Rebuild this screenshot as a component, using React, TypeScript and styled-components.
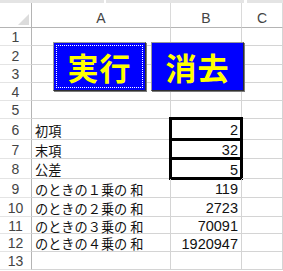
import React, { FC } from 'react';
import styled, { createGlobalStyle } from 'styled-components';

interface Row {
    h: number,
    a?: string,
    b?: string,
    box?: boolean,
}

const rows: Row[] = [
    { h: 18 },
    { h: 19 },
    { h: 18 },
    { h: 18 },
    { h: 18 },
    { h: 21, a: '初項', b: '2', box: true },
    { h: 19, a: '末項', b: '32', box: true },
    { h: 20, a: '公差', b: '5', box: true },
    { h: 19, a: 'のときの１乗の 和', b: '119' },
    { h: 19, a: 'のときの２乗の 和', b: '2723' },
    { h: 17, a: 'のときの３乗の 和', b: '70091' },
    { h: 18, a: 'のときの４乗の 和', b: '1920947' },
    { h: 18 },
];

const columns = ['A', 'B', 'C'];

const App: FC = () => {
    const template = rows.map((r) => `${r.h}px`).join(' ');

    return (
        <>
            <GlobalStyle />
            <Page>
                <TopStrip />
                <Sheet $rows={template}>
                    <Corner>
                        <svg width="11" height="11" viewBox="0 0 11 11">
                            <polygon points="11,0 11,11 0,11" fill="#dcdcdc" />
                        </svg>
                    </Corner>
                    {columns.map((c) => (
                        <ColHeader key={c}>{c}</ColHeader>
                    ))}
                    {rows.map((r, i) => (
                        <React.Fragment key={i}>
                            <RowHeader>{i + 1}</RowHeader>
                            <Cell>{r.a}</Cell>
                            <Cell $num $box={r.box}>{r.b}</Cell>
                            <Cell />
                        </React.Fragment>
                    ))}
                </Sheet>
                <CommandButton $left={53} $focused>実行</CommandButton>
                <CommandButton $left={151}>消去</CommandButton>
            </Page>
        </>
    );
};
export default App;

const GlobalStyle = createGlobalStyle`
    html, body {
        margin: 0;
        padding: 0;
        background: #fff;
    }
    body {
        font-family: "Noto Sans CJK JP", "Liberation Sans", sans-serif;
    }
`;

const Page = styled.div`
    position: relative;
    width: 283px;
    height: 271px;
    overflow: hidden;
    background: #fff;
`;

const TopStrip = styled.div`
    height: 3px;
    background: linear-gradient(to right, #e4e4e4 0 104px, #fff 104px 106px, #e4e4e4 106px 244px, #fff 244px 247px, #e4e4e4 247px);
`;

const Sheet = styled.div<{ $rows: string }>`
    display: grid;
    grid-template-columns: 32px 139px 71px 1fr;
    grid-template-rows: 25px ${(p) => p.$rows};
`;

const Corner = styled.div`
    display: flex;
    align-items: flex-end;
    justify-content: flex-end;
    padding: 0 2px 2px 0;
    border-right: 1px solid #b4b4b4;
    border-bottom: 1px solid #b4b4b4;
`;

const ColHeader = styled.div`
    display: flex;
    align-items: center;
    justify-content: center;
    padding-top: 6px;
    box-sizing: border-box;
    font-family: "Liberation Sans", sans-serif;
    font-size: 14px;
    color: #444;
    border-bottom: 1px solid #b4b4b4;
    border-right: 1px solid #dadada;
`;

const RowHeader = styled.div`
    display: flex;
    align-items: center;
    justify-content: center;
    padding-top: 1px;
    font-family: "Liberation Sans", sans-serif;
    font-size: 14px;
    color: #444;
    border-right: 1px solid #b4b4b4;
    border-bottom: 1px solid #e4e4e4;
`;

const Cell = styled.div<{ $num?: boolean, $box?: boolean }>`
    position: relative;
    display: flex;
    align-items: center;
    justify-content: ${(p) => (p.$num ? 'flex-end' : 'flex-start')};
    padding: ${(p) => (p.$num ? '2px 3px 0 0' : '2px 0 0 3px')};
    box-sizing: border-box;
    font-family: ${(p) => (p.$num ? '"Liberation Sans", sans-serif' : '"Noto Sans CJK JP", sans-serif')};
    font-size: ${(p) => (p.$num ? '14.5px' : '13.2px')};
    color: #111;
    white-space: nowrap;
    border-right: 1px solid #d4d4d4;
    border-bottom: 1px solid #d4d4d4;

    ${(p) => p.$box && `
        &::after {
            content: '';
            position: absolute;
            top: -2px;
            left: -2px;
            right: -2px;
            bottom: -2px;
            border: 3px solid #000;
        }
    `}
`;

const CommandButton = styled.div<{ $left: number, $focused?: boolean }>`
    position: absolute;
    top: 42px;
    left: ${(p) => p.$left}px;
    width: 93px;
    height: 49px;
    box-sizing: border-box;
    display: flex;
    align-items: center;
    justify-content: center;
    background: #0000ff;
    border: 1px solid;
    border-color: #9a9a9a #303030 #303030 #9a9a9a;
    box-shadow: 1px 1px 0 #7a7a7a;
    color: #ffff00;
    font-family: "Noto Sans CJK JP", sans-serif;
    font-weight: 700;
    font-size: 31px;
    line-height: 1;
    letter-spacing: 1px;

    ${(p) => p.$focused && `
        &::before {
            content: '';
            position: absolute;
            inset: 2px;
            border: 1px dotted #fff;
        }
    `}
`;
